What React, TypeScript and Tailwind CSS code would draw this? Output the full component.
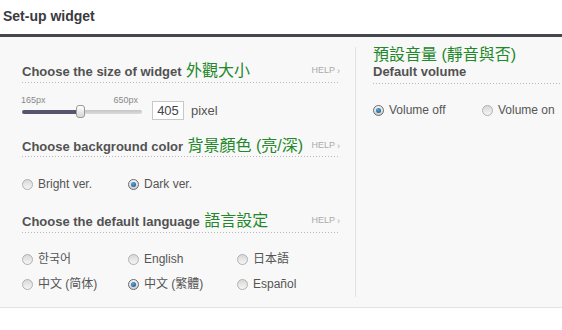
import type { ReactNode } from 'react'

const FONT = "font-['Liberation_Sans','Noto_Sans_CJK_TC',sans-serif]"

function Radio({ checked }: { checked?: boolean }) {
  return (
    <span
      className={`flex items-center justify-center w-[11px] h-[11px] rounded-full border shrink-0 ${
        checked
          ? 'border-[#6a6a6a] bg-[linear-gradient(#f4f4f4,#cfcfcf)]'
          : 'border-[#b0b0b0] bg-[linear-gradient(#d8d8d8,#f6f6f6)]'
      }`}
    >
      {checked && (
        <span className="w-[5px] h-[5px] rounded-full bg-[radial-gradient(circle_at_40%_35%,#5aa6dc,#0f4f80)]" />
      )}
    </span>
  )
}

function Option({ label, checked, width }: { label: string; checked?: boolean; width?: string }) {
  return (
    <div className={`flex items-center gap-[5px] ${width ?? ''}`}>
      <Radio checked={checked} />
      <span className="text-[12px] leading-[20px] text-[#555]">{label}</span>
    </div>
  )
}

function Dotted() {
  return <div className="h-px bg-[linear-gradient(to_right,#b8b8b8_1px,transparent_1px)] bg-[length:3px_1px]" />
}

function Heading({ title, zh }: { title: string; zh: ReactNode }) {
  return (
    <div className="flex items-center justify-between h-[18px]">
      <div className="leading-[18px] whitespace-nowrap">
        <span className="text-[13px] font-bold text-[#525252]">{title}</span>{' '}
        <span className="text-[16px] text-[#22882a]">{zh}</span>
      </div>
      <span className="flex items-center gap-[2px] text-[9px] text-[#aaa] -mr-[2px]">
        HELP<span className="text-[9px] leading-none">›</span>
      </span>
    </div>
  )
}

export default function App() {
  return (
    <div className={`w-[562px] h-[330px] bg-white overflow-hidden ${FONT}`}>
      <div className="h-[34px] pl-[3px] pt-[8px]">
        <h1 className="text-[14px] leading-[16px] font-bold text-[#3a3a40]">Set-up widget</h1>
      </div>
      <div className="h-[3px] bg-[#46464e]" />

      <div className="flex h-[271px] bg-[#f8f8f8] border-b border-[#e3e3e3]">
        {/* left column */}
        <div className="flex flex-col w-[316px] ml-[22px] shrink-0">
          <div className="mt-[25px]">
            <Heading title="Choose the size of widget" zh="外觀大小" />
          </div>
          <div className="mt-[2px]">
            <Dotted />
          </div>

          <div className="flex h-[42px] pt-[12px]">
            <div className="flex flex-col w-[122px]">
              <div className="flex h-[10px] text-[9px] leading-[10px] text-[#888]">
                <span className="-ml-px">165px</span>
                <span className="ml-[68px]">650px</span>
              </div>
              <div className="relative flex items-center h-[14px] w-[120px]">
                <div className="flex w-full h-[4px] rounded-full overflow-hidden">
                  <div className="w-[58px] bg-[#55556f]" />
                  <div className="flex-1 bg-[linear-gradient(#c4c4c4,#dcdcdc)]" />
                </div>
                <div className="absolute left-[54px] top-0 w-[9px] h-[13px] rounded-[3px] border border-[#9a9a9a] bg-[linear-gradient(#ffffff,#d6d6d6)]" />
              </div>
            </div>
            <div className="flex items-center justify-center mt-[6px] ml-[8px] w-[32px] h-[19px] border border-[#c8c8c8] bg-white text-[13px] text-[#444]">
              405
            </div>
            <span className="mt-[6px] ml-[7px] text-[13px] leading-[19px] text-[#555]">pixel</span>
          </div>

          <div className="mt-[12px]">
            <Heading title="Choose background color" zh="背景顏色 (亮/深)" />
          </div>
          <div className="mt-[1px]">
            <Dotted />
          </div>
          <div className="flex mt-[17px] h-[20px]">
            <Option label="Bright ver." width="w-[106px]" />
            <Option label="Dark ver." checked />
          </div>

          <div className="mt-[18px]">
            <Heading title="Choose the default language" zh="語言設定" />
          </div>
          <div className="mt-[2px]">
            <Dotted />
          </div>
          <div className="flex mt-[16px] h-[20px]">
            <Option label="한국어" width="w-[106px]" />
            <Option label="English" width="w-[109px]" />
            <Option label="日本語" />
          </div>
          <div className="flex mt-[5px] h-[20px]">
            <Option label="中文 (简体)" width="w-[106px]" />
            <Option label="中文 (繁體)" checked width="w-[109px]" />
            <Option label="Español" />
          </div>
        </div>

        {/* divider */}
        <div className="w-px ml-[17px] my-[10px] bg-[#e2e2e2]" />

        {/* right column */}
        <div className="flex flex-col flex-1 ml-[17px]">
          <div className="mt-[9px] h-[18px] leading-[18px] text-[16px] text-[#22882a] whitespace-nowrap">
            預設音量 (靜音與否)
          </div>
          <div className="h-[16px] leading-[16px] text-[13px] font-bold text-[#525252]">Default volume</div>
          <div className="mt-[3px]">
            <Dotted />
          </div>
          <div className="flex mt-[16px] h-[20px] whitespace-nowrap">
            <Option label="Volume off" checked width="w-[109px]" />
            <Option label="Volume on" />
          </div>
        </div>
      </div>
    </div>
  )
}
